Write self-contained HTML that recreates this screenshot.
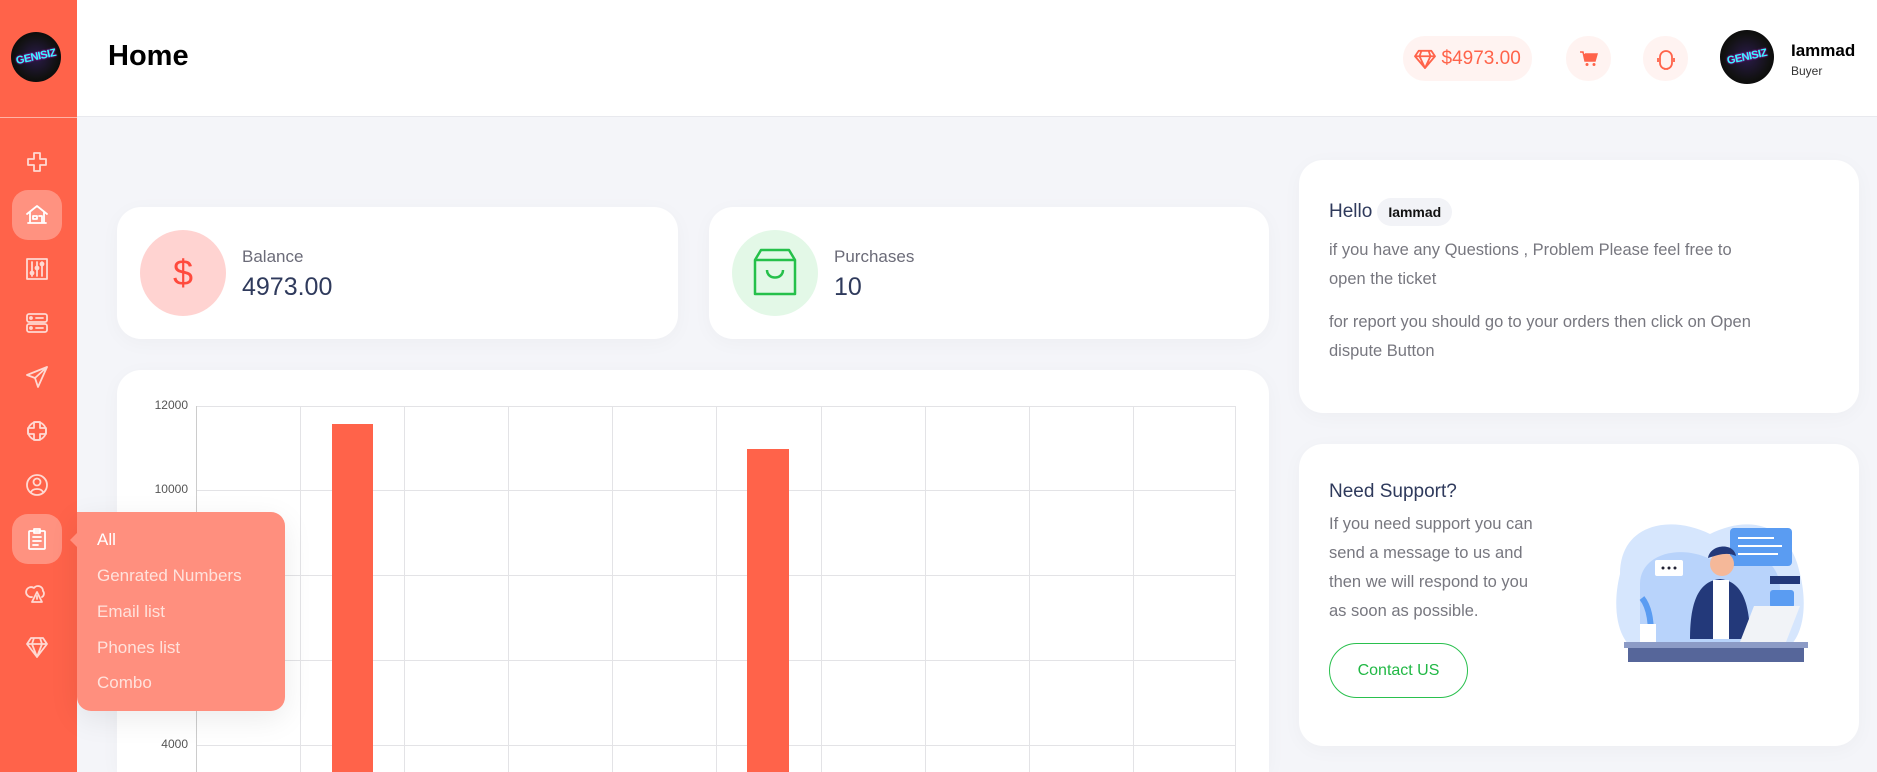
<!DOCTYPE html>
<html><head><meta charset="utf-8"><style>
*{box-sizing:border-box;margin:0;padding:0}
html{width:1877px;height:772px;overflow:hidden}
body{width:1877px;height:772px;overflow:hidden;background:#f4f5f9;font-family:"Liberation Sans",sans-serif;position:relative}
.sb{position:absolute;left:0;top:0;width:77px;height:772px;background:#ff634a}
.sb .line{position:absolute;left:0;top:117px;width:77px;height:1px;background:#ffb3a6}
.logo{position:absolute;border-radius:50%;background:radial-gradient(circle,#2a1b4a 0,#111 60%,#000 100%);overflow:hidden}
.logo span{position:absolute;left:50%;top:50%;transform:translate(-50%,-50%) rotate(-12deg);color:#3ff;font-weight:bold;font-size:11px;text-shadow:0 0 2px #f0f;letter-spacing:-0.5px}
.ic{position:absolute;left:12px;width:50px;height:50px;display:flex;align-items:center;justify-content:center;border-radius:16px}
.ic.act{background:rgba(255,255,255,.3)}
.ic svg{width:24px;height:24px;fill:none;stroke:#ffd9d2;stroke-width:1.8;stroke-linecap:round;stroke-linejoin:round}
.ic.act svg{stroke:#fff}
.hdr{position:absolute;left:77px;top:0;right:0;height:117px;background:#fff;border-bottom:1px solid #e8e9ee}
.title{position:absolute;left:108px;top:40px;font-size:29px;font-weight:bold;color:#000}
.pill{position:absolute;top:36px;height:45px;background:#fff3f1;border-radius:22px;display:flex;align-items:center;justify-content:center;color:#ff634a}
.card{position:absolute;background:#fff;border-radius:24px;box-shadow:0 4px 20px rgba(0,0,0,.03)}
.lbl{font-size:17px;color:#6b6b78}
.val{font-size:25px;color:#2f3a5c;margin-top:6px}
.gl{position:absolute;background:#e3e3e6}
.ylab{position:absolute;right:calc(1877px - 188px);font-size:12px;color:#555;text-align:right}
.pop{position:absolute;left:77px;top:512px;width:208px;height:199px;background:#ff8f7e;border-radius:0 14px 14px 14px;box-shadow:0 8px 30px rgba(0,0,0,.08)}
.pop div{position:absolute;left:20px;font-size:17px;color:#ffe2dc}
p.t{font-size:16.5px;color:#77777f;line-height:29px}
</style></head><body>
<div class="hdr"></div>
<div class="title">Home</div>
<div class="pill" style="left:1403px;width:129px;font-size:19px"><svg width="22" height="20" viewBox="0 0 24 22" fill="none" stroke="#ff634a" stroke-width="2" stroke-linejoin="round"><path d="M5 2h14l4 6-11 13L1 8z M1 8h22 M8 2l-2 6 6 13 6-13-2-6"/></svg>&nbsp;$4973.00</div>
<div class="pill" style="left:1566px;width:45px"><svg width="18" height="16" viewBox="0 0 18 16"><path d="M0 1h3l2 9h10l2-7H5" fill="#ff634a" stroke="#ff634a" stroke-width="1.5"/><circle cx="7" cy="13.5" r="1.5" fill="#ff634a"/><circle cx="14" cy="13.5" r="1.5" fill="#ff634a"/></svg></div>
<div class="pill" style="left:1643px;width:45px"><svg width="20" height="22" viewBox="0 0 20 22" fill="none" stroke="#ff634a" stroke-width="1.8"><path d="M4 9a6 6 0 0 1 12 0v6a6 6 0 0 1-12 0z M2 10v4 M18 10v4 M8 21h4"/></svg></div>
<div class="logo" style="left:1720px;top:30px;width:54px;height:54px"><span>GENISIZ</span></div>
<div style="position:absolute;left:1791px;top:41px;font-size:17px;font-weight:bold;color:#000">Iammad</div>
<div style="position:absolute;left:1791px;top:64px;font-size:12px;color:#333">Buyer</div>

<div class="sb"><div class="line"></div></div>
<div class="logo" style="left:11px;top:32px;width:50px;height:50px"><span>GENISIZ</span></div>
<div class="ic" style="top:137px"><svg viewBox="0 0 24 24"><path d="M9 3h6v6h6v6h-6v6H9v-6H3V9h6z"/></svg></div>
<div class="ic act" style="top:190px"><svg viewBox="0 0 24 24"><path d="M2 11L12 3l10 8 M5 9v11h14V9 M8 13h4v3H8z M14 13h3v7 M3 20h18"/></svg></div>
<div class="ic" style="top:244px"><svg viewBox="0 0 24 24"><rect x="2" y="2" width="20" height="20"/><path d="M7 5v14 M12 5v14 M17 5v14"/><circle cx="7" cy="16" r="1.5"/><circle cx="12" cy="11" r="1.5"/><circle cx="17" cy="7" r="1.5"/></svg></div>
<div class="ic" style="top:298px"><svg viewBox="0 0 24 24"><rect x="2" y="3" width="20" height="8" rx="2"/><rect x="2" y="13" width="20" height="8" rx="2"/><circle cx="6" cy="7" r="1"/><circle cx="6" cy="17" r="1"/><path d="M11 7h7 M11 17h7"/></svg></div>
<div class="ic" style="top:352px"><svg viewBox="0 0 24 24"><path d="M22 2L2 10l8 3 3 9z M10 13L22 2"/></svg></div>
<div class="ic" style="top:406px"><svg viewBox="0 0 24 24"><path d="M9 3h6v6h6v6h-6v6H9v-6H3V9h6z"/><circle cx="12" cy="12" r="9"/></svg></div>
<div class="ic" style="top:460px"><svg viewBox="0 0 24 24"><circle cx="12" cy="12" r="10"/><circle cx="12" cy="9" r="3.5"/><path d="M6 19c2-4 10-4 12 0"/></svg></div>
<div class="ic act" style="top:514px"><svg viewBox="0 0 24 24"><rect x="4" y="4" width="16" height="18" rx="1"/><rect x="9" y="2" width="6" height="4"/><path d="M8 10h8 M8 14h8 M8 18h5"/></svg></div>
<div class="ic" style="top:568px"><svg viewBox="0 0 24 24"><path d="M7 16a5 5 0 1 1 2-9 5 5 0 0 1 9 3 4 4 0 0 1-1 6 M12 11l-5 10h10z M12 15v3"/></svg></div>
<div class="ic" style="top:622px"><svg viewBox="0 0 24 24"><path d="M6 3h12l4 6-10 13L2 9z M2 9h20 M9 3l-2 6 5 13 5-13-2-6"/></svg></div>

<div class="card" style="left:117px;top:207px;width:561px;height:132px">
 <div style="position:absolute;left:23px;top:23px;width:86px;height:86px;border-radius:50%;background:#ffd3d1;display:flex;align-items:center;justify-content:center;color:#ff4a3d;font-size:36px">$</div>
 <div style="position:absolute;left:125px;top:40px"><div class="lbl">Balance</div><div class="val">4973.00</div></div>
</div>
<div class="card" style="left:709px;top:207px;width:560px;height:132px">
 <div style="position:absolute;left:23px;top:23px;width:86px;height:86px;border-radius:50%;background:#e3f8e7;display:flex;align-items:center;justify-content:center"><svg width="48" height="50" viewBox="0 0 48 50" fill="none" stroke="#25c04a" stroke-width="2.5" stroke-linejoin="round"><path d="M4 12l6-10h28l6 10v34H4z M4 12h40 M16 22c0 10 16 10 16 0"/></svg></div>
 <div style="position:absolute;left:125px;top:40px"><div class="lbl">Purchases</div><div class="val">10</div></div>
</div>

<div class="card" style="left:117px;top:370px;width:1152px;height:402px;border-radius:24px 24px 0 0"></div>
<div class="gl" style="left:196px;top:406px;width:1039px;height:1px"></div>
<div class="gl" style="left:196px;top:490px;width:1039px;height:1px"></div>
<div class="gl" style="left:196px;top:575px;width:1039px;height:1px"></div>
<div class="gl" style="left:196px;top:660px;width:1039px;height:1px"></div>
<div class="gl" style="left:196px;top:745px;width:1039px;height:1px"></div>
<div class="gl" style="left:196px;top:406px;width:1px;height:366px;background:#ccc"></div>
<div class="gl" style="left:300px;top:406px;width:1px;height:366px"></div>
<div class="gl" style="left:404px;top:406px;width:1px;height:366px"></div>
<div class="gl" style="left:508px;top:406px;width:1px;height:366px"></div>
<div class="gl" style="left:612px;top:406px;width:1px;height:366px"></div>
<div class="gl" style="left:716px;top:406px;width:1px;height:366px"></div>
<div class="gl" style="left:821px;top:406px;width:1px;height:366px"></div>
<div class="gl" style="left:925px;top:406px;width:1px;height:366px"></div>
<div class="gl" style="left:1029px;top:406px;width:1px;height:366px"></div>
<div class="gl" style="left:1133px;top:406px;width:1px;height:366px"></div>
<div class="gl" style="left:1235px;top:406px;width:1px;height:366px"></div>
<div class="ylab" style="top:398px">12000</div>
<div class="ylab" style="top:482px">10000</div>
<div class="ylab" style="top:737px">4000</div>
<div style="position:absolute;left:332px;top:424px;width:41px;height:348px;background:#ff634a"></div>
<div style="position:absolute;left:747px;top:449px;width:42px;height:323px;background:#ff634a"></div>

<div class="pop">
 <div style="top:18px;color:#fff">All</div>
 <div style="top:54px">Genrated Numbers</div>
 <div style="top:90px">Email list</div>
 <div style="top:126px">Phones list</div>
 <div style="top:161px">Combo</div>
</div>
<div style="position:absolute;left:70px;top:533px;width:0;height:0;border-top:7px solid transparent;border-bottom:7px solid transparent;border-right:7px solid #ff8f7e"></div>

<div class="card" style="left:1299px;top:160px;width:560px;height:253px">
 <div style="position:absolute;left:30px;top:38px;display:flex;align-items:center"><span style="font-size:19px;color:#2f3a5c">Hello</span><span style="margin-left:5px;background:#f2f3f7;border-radius:16px;padding:6px 11px;font-size:14px;font-weight:bold;color:#111">Iammad</span></div>
 <p class="t" style="position:absolute;left:30px;top:76px;width:432px">if you have any Questions , Problem Please feel free to open the ticket</p>
 <p class="t" style="position:absolute;left:30px;top:148px;width:432px">for report you should go to your orders then click on Open dispute Button</p>
</div>

<div class="card" style="left:1299px;top:444px;width:560px;height:302px">
 <div style="position:absolute;left:30px;top:37px;font-size:19px;color:#2f3a5c">Need Support?</div>
 <p class="t" style="position:absolute;left:30px;top:66px;width:212px">If you need support you can send a message to us and then we will respond to you as soon as possible.</p>
 <div style="position:absolute;left:30px;top:199px;width:139px;height:55px;border:1.5px solid #2ac04e;border-radius:28px;display:flex;align-items:center;justify-content:center;color:#21b845;font-size:16px">Contact US</div>
 <svg style="position:absolute;left:311px;top:70px" width="210" height="160" viewBox="0 0 210 160">
  <path d="M10 60C10 10 60 0 100 20 140 0 180 10 190 60 200 100 190 140 160 140H40C10 140 0 100 10 60z" fill="#d6e6fd"/>
  <path d="M30 70c0-30 40-40 70-25 30-15 70-5 70 30v60H30z" fill="#b8d3fb"/>
  <rect x="120" y="14" width="62" height="38" rx="4" fill="#5a9cf2"/>
  <path d="M128 24h36M128 32h44M128 40h40" stroke="#fff" stroke-width="2"/>
  <rect x="45" y="46" width="28" height="16" rx="2" fill="#fff"/>
  <circle cx="53" cy="54" r="1.5" fill="#223"/><circle cx="59" cy="54" r="1.5" fill="#223"/><circle cx="65" cy="54" r="1.5" fill="#223"/>
  <rect x="160" y="62" width="30" height="8" fill="#23397a"/>
  <rect x="160" y="76" width="24" height="18" rx="3" fill="#5a9cf2"/>
  <path d="M80 125c0-40 10-58 30-60 20 2 30 20 30 60z" fill="#23397a"/>
  <path d="M103 66h16v59h-16z" fill="#fff"/>
  <circle cx="112" cy="50" r="12" fill="#f5b899"/>
  <path d="M98 44c2-14 26-16 28-2-8-4-16-2-28 2z" fill="#23397a"/>
  <path d="M32 84c8 10 10 28 8 42" stroke="#5a9cf2" stroke-width="6" fill="none"/>
  <path d="M30 110h16v18H30z" fill="#fff"/>
  <path d="M130 128l14-36h46l-14 36z" fill="#f1f3f7"/>
  <rect x="14" y="128" width="184" height="6" fill="#8c9bc6"/>
  <rect x="18" y="134" width="176" height="14" fill="#56669a"/>
 </svg>
</div>
</body></html>
